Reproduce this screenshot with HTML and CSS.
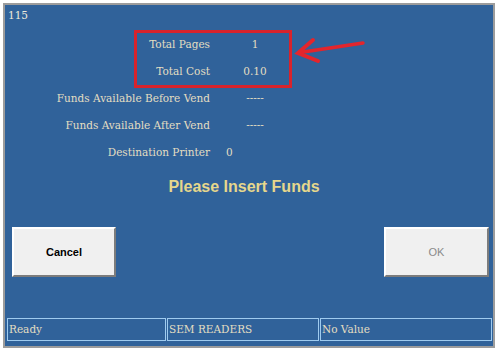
FILE: index.html
```html
<!DOCTYPE html>
<html lang="en">
<head>
    <meta charset="UTF-8">
    <title>Vend</title>
    <link rel="stylesheet" href="styles.css">
</head>
<body>
    <div class="frame">
        <div class="screen">
            <div class="header">115</div>
            <div class="info">
                <div class="label">Total Pages</div><div class="value">1</div>
                <div class="label">Total Cost</div><div class="value">0.10</div>
                <div class="label">Funds Available Before Vend</div><div class="value">-----</div>
                <div class="label">Funds Available After Vend</div><div class="value">-----</div>
                <div class="label">Destination Printer</div><div class="value left">0</div>
            </div>
            <div class="message">Please Insert Funds</div>
            <div class="actions">
                <button class="btn btn-cancel">Cancel</button>
                <button class="btn btn-ok">OK</button>
            </div>
            <div class="status">
                <div class="status-cell first">Ready</div>
                <div class="status-cell second">SEM READERS</div>
                <div class="status-cell third">No Value</div>
            </div>
        </div>
        <svg class="annotation" width="500" height="353" viewBox="0 0 500 353">
            <rect x="135.5" y="31.5" width="155" height="55" fill="none" stroke="#d8232c" stroke-width="3"/>
            <line x1="300" y1="52.5" x2="363" y2="43" stroke="#e3252c" stroke-width="3.5" stroke-linecap="round"/>
            <polyline points="313,40 298,53 318,61" fill="none" stroke="#e3252c" stroke-width="4" stroke-linecap="round" stroke-linejoin="miter"/>
        </svg>
    </div>
</body>
</html>
```

FILE: styles.css
```css
body {
    margin: 0;
    background-color: #fff;
}
.frame {
    position: relative;
    width: 500px;
    height: 353px;
    padding: 3px 5px 0 3px;
    box-sizing: border-box;
}
.screen {
    display: flex;
    flex-direction: column;
    height: 345px;
    border: 2px solid #9c9c9c;
    background-color: #30629a;
    color: #e3dec2;
    font-family: "DejaVu Serif", serif;
    font-size: 10.5px;
    box-sizing: border-box;
}
.header {
    height: 20px;
    padding: 3px 0 0 3px;
    line-height: 14px;
    color: #eeeadb;
}
.info {
    display: grid;
    grid-template-columns: 205px 70px;
    grid-auto-rows: 27px;
    column-gap: 10px;
    margin-top: 2px;
    align-items: center;
}
.label {
    text-align: right;
    white-space: nowrap;
}
.value {
    text-align: center;
}
.value.left {
    text-align: left;
    padding-left: 6px;
}
.message {
    margin-top: 9px;
    padding-right: 10px;
    line-height: 26px;
    text-align: center;
    font-family: "Liberation Sans", Arial, sans-serif;
    font-weight: bold;
    font-size: 16px;
    color: #e6d78c;
}
.actions {
    display: flex;
    justify-content: space-between;
    margin-top: 27px;
    padding: 0 4px 0 7px;
}
.btn {
    width: 104px;
    height: 50px;
    background-color: #f0f0f0;
    border: 2px solid;
    border-color: #ffffff #7c7c7c #7c7c7c #ffffff;
    font-family: "Liberation Sans", Arial, sans-serif;
    font-size: 11px;
}
.btn-cancel {
    font-weight: bold;
    color: #000;
}
.btn-ok {
    width: 105px;
    color: #8a8a8a;
}
.status {
    display: flex;
    gap: 1px;
    height: 23px;
    margin-top: auto;
    margin-bottom: 5px;
    padding: 0 1px 0 2px;
}
.status-cell {
    border: 1px solid #9fcbef;
    padding-left: 1px;
    line-height: 21px;
    white-space: nowrap;
    box-sizing: border-box;
}
.status-cell.first {
    width: 159px;
}
.status-cell.second {
    width: 152px;
}
.status-cell.third {
    flex: 1;
}
.annotation {
    position: absolute;
    left: 0;
    top: 0;
    pointer-events: none;
}
```
